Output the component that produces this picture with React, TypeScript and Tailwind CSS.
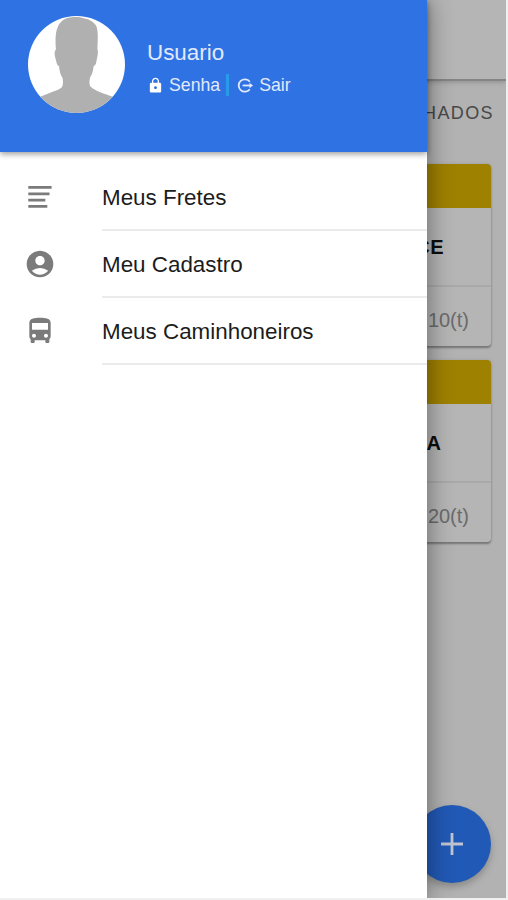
import { MdAccountCircle, MdDirectionsBus, MdLock } from "react-icons/md";
import type { ReactNode } from "react";

function TextLinesIcon() {
  return (
    <svg width="26" height="26" viewBox="0 0 26 26" fill="none" stroke="currentColor" strokeWidth="2.7">
      <path d="M1.300 3.300h23.300M1.300 9.800h21.200M1.300 16.100h17M1.300 22.300h19" />
    </svg>
  );
}

function LogoutIcon() {
  return (
    <svg width="17" height="17" viewBox="0 0 17 17" fill="none" stroke="currentColor" strokeWidth="1.8">
      <path d="M12.800 4.700A6.200 6.200 0 1 0 12.800 12.300" />
      <path d="M5.600 8.500h8.400" />
      <path d="M12.500 5.700L16 8.500L12.500 11.300Z" fill="currentColor" stroke="none" />
    </svg>
  );
}

function Avatar() {
  return (
    <svg className="shrink-0" width="97" height="97" viewBox="0 0 96 96">
      <defs>
        <clipPath id="avatar-circle">
          <circle cx="48" cy="48" r="48" />
        </clipPath>
      </defs>
      <g clipPath="url(#avatar-circle)">
        <rect width="96" height="96" fill="#fff" />
        <path
          d="M27.700 33C27 25 27 17 29 12C31 7 34 3.500 39 2C44 .8 51 .5 54 2C60 3 64 5 67 9C70 14 69 24 68.700 33C70 36 68.500 41 67.500 46C67 48.500 66 49 65 49.500C64.500 54 63.500 58 61.500 60.500C60.500 64 60.500 68 62 70C66 74 76 77 84 80V96H12V80C20 76 30 74 33.500 70.500C35 68 34.700 65 34.300 61.500C32 58 31 54 30.700 49.500C29 49 28.500 47.500 28 45C27 41 25 36 27.700 33Z"
          fill="#b0b0b1"
        />
      </g>
    </svg>
  );
}

interface MenuItemProps {
  icon: ReactNode;
  label: string;
}

function MenuItem({ icon, label }: MenuItemProps) {
  return (
    <li className="flex h-[67px] items-stretch">
      <span className="flex w-[102px] items-center pb-[2px] pl-[24px] text-[#7b7b7b]">
        <span className="flex w-8 justify-center">{icon}</span>
      </span>
      <span className="flex flex-1 items-center border-b-2 border-[#ebebeb] pt-[2px] text-[22.4px] text-[#1c1c1c]">
        {label}
      </span>
    </li>
  );
}

interface FreightCardProps {
  city: ReactNode;
  weight: string;
}

function FreightCard({ city, weight }: FreightCardProps) {
  return (
    <div className="flex h-[182px] flex-col overflow-hidden rounded-[4px] bg-[#b5b5b5] shadow-[0_2px_2px_#777,0_0_3px_#999]">
      <div className="h-[44px] bg-[#9f8100]" />
      <div className="flex h-[79px] items-center justify-end border-b-2 border-[#a9a9a9] pr-[47px] text-[20px] font-bold text-[#0c0c0c]">
        {city}
      </div>
      <div className="flex flex-1 items-center justify-end pt-[6px] pr-[22px] text-[20px] text-[#6b6b6b]">
        {weight}
      </div>
    </div>
  );
}

export default function App() {
  return (
    <div className="h-[900px] w-[508px] overflow-hidden bg-[#f0f0f0] font-['Liberation_Sans',Arial,sans-serif]">
      <div className="relative h-[898px] w-[506px] overflow-hidden bg-[#b2b2b2]">
        <header className="h-[81px] border-b-2 border-[#858585] bg-[#b5b5b5] shadow-[0_1px_5px_#8c8c8c]" />
        <div className="flex h-[65px] items-center justify-end pr-[12px] text-[18px] tracking-[1.4px] text-[#484848]">
          HADOS
        </div>
        <main className="flex flex-col gap-[14px] pt-[18px] pr-[15px]">
          <FreightCard city={<span className="tracking-[0.5px]">CE</span>} weight="10(t)" />
          <FreightCard city={<span className="pr-[3px]">A</span>} weight="20(t)" />
        </main>
        <button
          aria-label="Adicionar"
          className="absolute right-[15px] bottom-[15px] flex h-[78px] w-[78px] items-center justify-center rounded-full bg-[#2159b6] shadow-[0_4px_7px_#8a8a8a]"
        >
          <svg width="24" height="24" viewBox="0 0 24 24" stroke="#bfc4ce" strokeWidth="2.8">
            <path d="M12 1v22M1 12h22" />
          </svg>
        </button>

        <aside className="absolute inset-y-0 left-0 w-[427px] bg-white shadow-[0_0_24px_rgba(0,0,0,0.45)]">
          <div className="flex h-[152px] bg-[#2f72e3] pt-[16px] pl-[28px] shadow-[0_2px_6px_rgba(0,0,0,0.4)]">
            <Avatar />
            <div className="pt-[23px] pl-[22px] text-[#e0eafc]">
              <div className="text-[22.4px] leading-[27px]">Usuario</div>
              <div className="flex h-[25px] items-center pt-[13px] text-[17.7px]">
                <MdLock className="mr-[5px] h-[17px] w-[17px] text-white" />
                <span>Senha</span>
                <span className="mr-[8px] ml-[6px] h-[22px] w-[3px] bg-[#289be9]" />
                <LogoutIcon />
                <span className="ml-[5px]">Sair</span>
              </div>
            </div>
          </div>
          <ul className="pt-[12px]">
            <MenuItem icon={<TextLinesIcon />} label="Meus Fretes" />
            <MenuItem icon={<MdAccountCircle size={32} />} label="Meu Cadastro" />
            <MenuItem icon={<MdDirectionsBus size={32} />} label="Meus Caminhoneiros" />
          </ul>
        </aside>
      </div>
    </div>
  );
}
